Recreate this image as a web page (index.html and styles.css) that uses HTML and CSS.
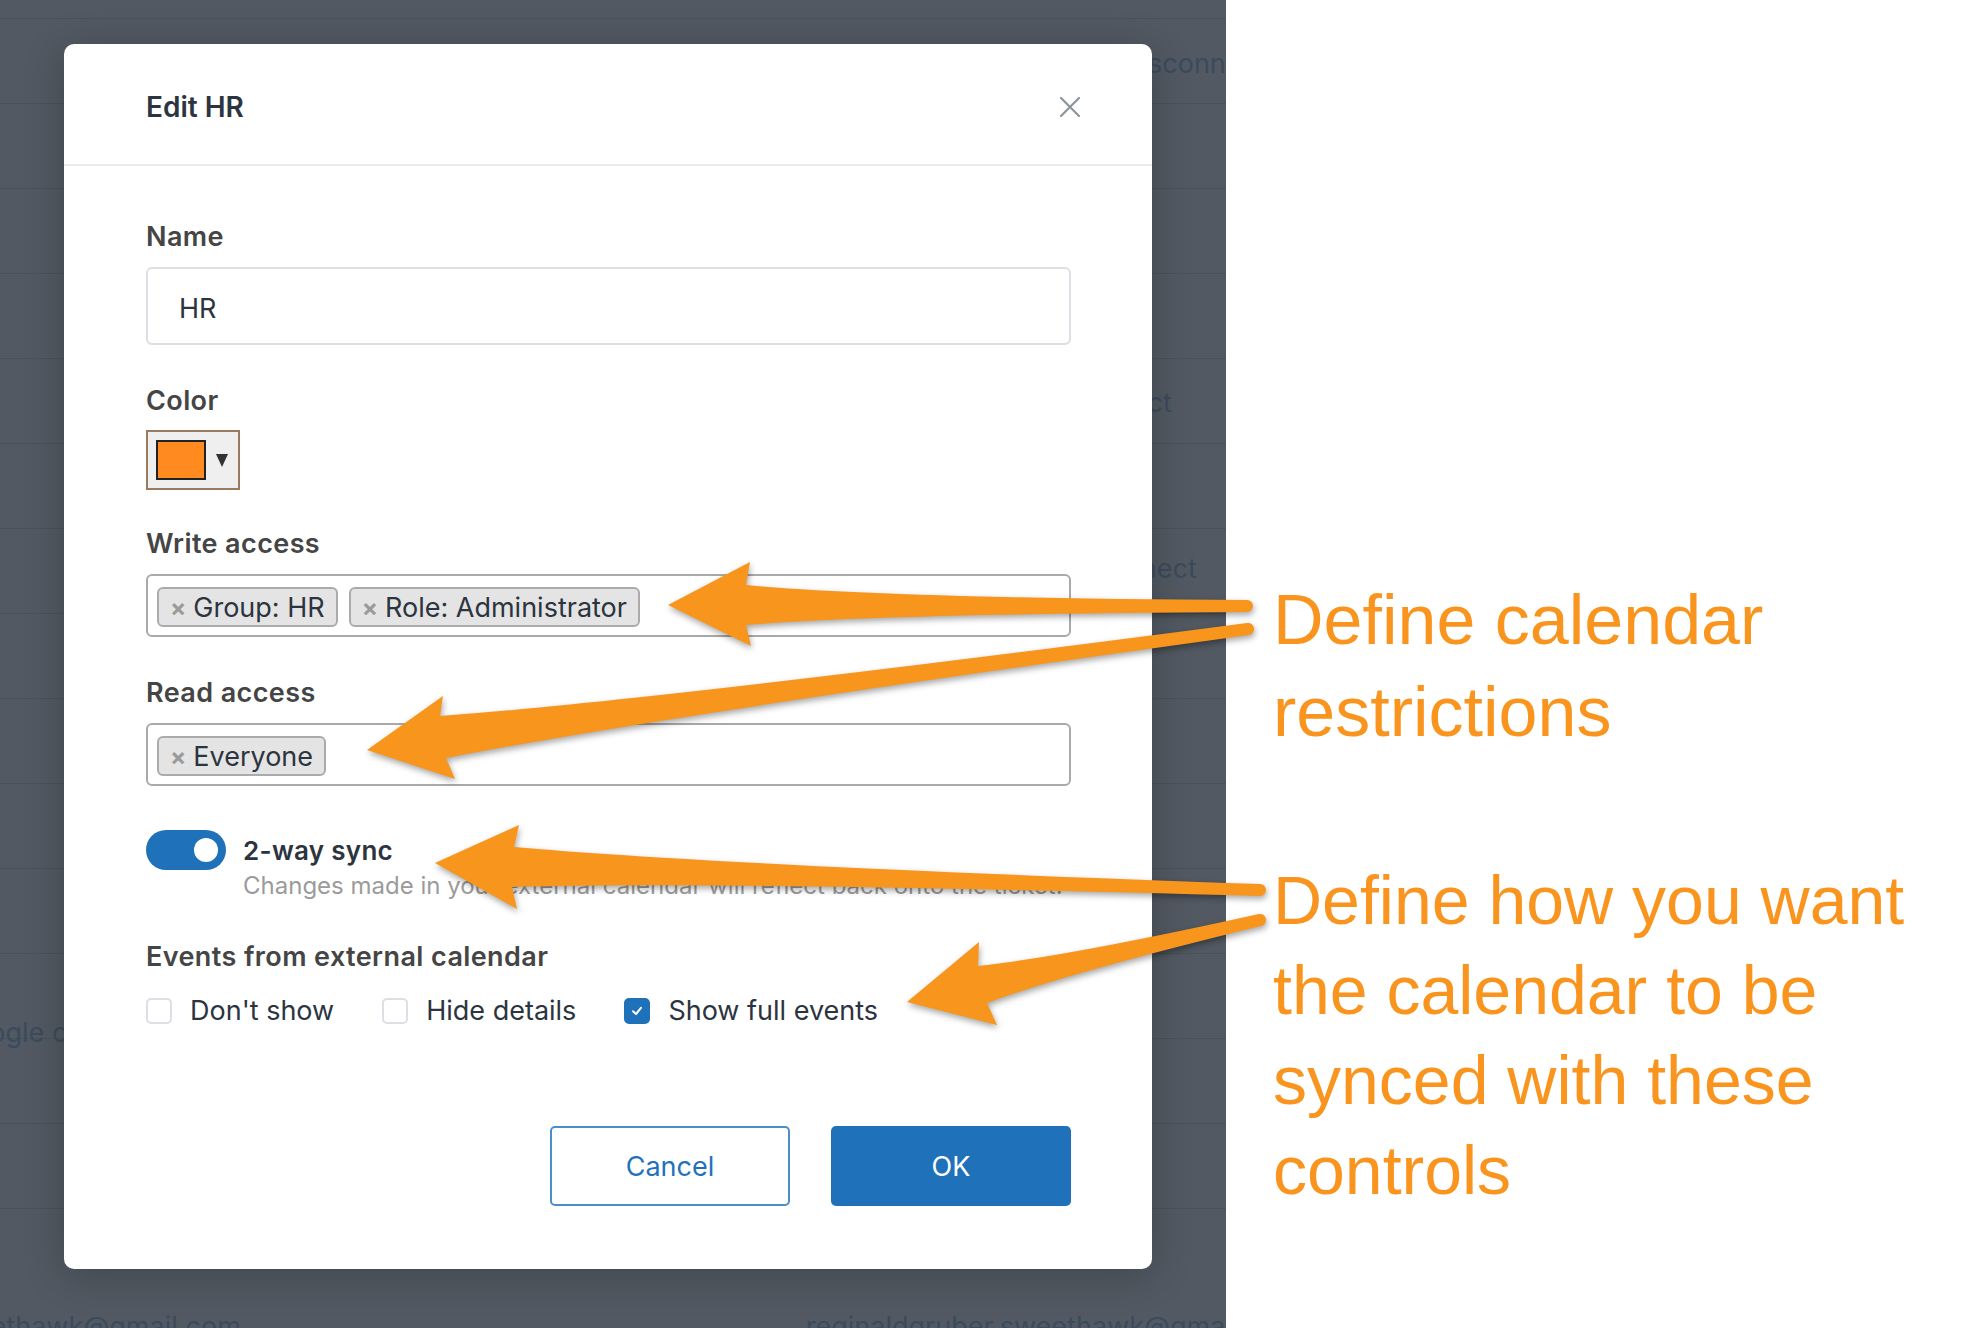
FILE: index.html
```html
<!DOCTYPE html>
<html lang="en">
<head>
    <meta charset="UTF-8">
    <meta name="viewport" content="width=device-width, initial-scale=1.0">
    <title>Edit HR calendar</title>
    <link rel="stylesheet" href="styles.css">
</head>
<body>
    <div class="screen">
        <main class="app">
            <!-- page behind the dialog, dimmed -->
            <div class="bg-rows">
                <div class="bg-row bg-row-top"></div>
                <div class="bg-row"><span class="bg-text at-disconnect">Disconnect</span></div>
                <div class="bg-row"></div>
                <div class="bg-row"></div>
                <div class="bg-row"></div>
                <div class="bg-row"><span class="bg-text at-connect-a">Connect</span></div>
                <div class="bg-row"></div>
                <div class="bg-row"><span class="bg-text at-connect-b">Connect</span></div>
                <div class="bg-row"></div>
                <div class="bg-row"></div>
                <div class="bg-row"></div>
                <div class="bg-row"></div>
                <div class="bg-row"><span class="bg-text at-google">Google calendar</span></div>
                <div class="bg-row"></div>
                <div class="bg-row"></div>
                <div class="bg-row bg-row-bottom">
                    <span class="bg-text at-mail-a">sweethawk@gmail.com</span>
                    <span class="bg-text at-mail-b">reginaldgruber.sweethawk@gmail.com</span>
                </div>
            </div>

            <div class="backdrop">
                <section class="modal">
                    <header class="modal-head">
                        <h2 class="modal-title">Edit HR</h2>
                        <button class="close" aria-label="Close">
                            <svg width="20" height="20" viewBox="0 0 20 20">
                                <path d="M1 1 L19 19 M19 1 L1 19" stroke="#8b949d" stroke-width="2.2" stroke-linecap="round"/>
                            </svg>
                        </button>
                    </header>

                    <div class="modal-body">
                        <div class="field">
                            <label class="field-label">Name</label>
                            <div class="text-input">HR</div>
                        </div>

                        <div class="field field-color">
                            <label class="field-label label-color">Color</label>
                            <div class="color-btn">
                                <span class="swatch"></span>
                                <span class="caret"></span>
                            </div>
                        </div>

                        <div class="field">
                            <label class="field-label">Write access</label>
                            <div class="tags">
                                <span class="tag"><span class="tag-x">×</span>Group: HR</span>
                                <span class="tag"><span class="tag-x">×</span>Role: Administrator</span>
                            </div>
                        </div>

                        <div class="field field-read">
                            <label class="field-label">Read access</label>
                            <div class="tags">
                                <span class="tag"><span class="tag-x">×</span>Everyone</span>
                            </div>
                        </div>

                        <div class="sync">
                            <span class="toggle"><span class="knob"></span></span>
                            <div class="sync-text">
                                <div class="sync-title">2-way sync</div>
                                <div class="sync-help">Changes made in your external calendar will reflect back onto the ticket.</div>
                            </div>
                        </div>

                        <label class="field-label label-events">Events from external calendar</label>
                        <div class="checks">
                            <span class="check"><span class="box"></span>Don't show</span>
                            <span class="check"><span class="box"></span>Hide details</span>
                            <span class="check"><span class="box on">
                                <svg width="14" height="14" viewBox="0 0 14 14"><path d="M3 7.2 L6 10 L11 3.8" fill="none" stroke="#fff" stroke-width="2" stroke-linecap="round" stroke-linejoin="round"/></svg>
                            </span>Show full events</span>
                        </div>

                        <div class="actions">
                            <button class="btn btn-cancel">Cancel</button>
                            <button class="btn btn-ok">OK</button>
                        </div>
                    </div>
                </section>
            </div>
        </main>

        <aside class="notes">
            <p class="note note-restrict">Define calendar<br>restrictions</p>
            <p class="note note-sync">Define how you want<br>the calendar to be<br>synced with these<br>controls</p>
        </aside>
    </div>

    <!-- annotation arrows drawn over everything -->
    <svg class="arrows" width="1974" height="1328" viewBox="0 0 1974 1328">
        <g fill="#f8951d">
            <path d="M668 605 L750 562 L746 585 Q880 598 1247 600 A6 6 0 0 1 1247 612 Q880 614 746 625 L751 646 Z"/>
            <path d="M367 750 L443 696 L440 716 Q659 700 1247 623 A6 6 0 0 1 1249 635 Q661 716 446 758 L455 779 Z"/>
            <path d="M435 863 L519 825 L514 847 Q715 865 1260 884 A6 6 0 0 1 1260 896 Q715 881 512 887 L517 909 Z"/>
            <path d="M907 1002 L979 942 L978 966 Q1064 957 1259 914 A6 6 0 0 1 1261 926 Q1068 973 987 1003 L997 1025 Z"/>
        </g>
    </svg>
</body>
</html>
```

FILE: styles.css
```css
body {
    margin: 0;
    position: relative;
    font-family: Inter, "Noto Sans", sans-serif;
}
.screen {
    display: flex;
    width: 1974px;
    height: 1328px;
    overflow: hidden;
    background: #fff;
}

/* dimmed page behind the dialog */
.app {
    flex: none;
    width: 1226px;
    position: relative;
    overflow: hidden;
    background: #525962;
}
.bg-row {
    height: 84px;
    border-bottom: 1px solid #4a5159;
    display: flex;
    align-items: center;
    white-space: nowrap;
}
.bg-row-top {
    height: 18px;
}
.bg-row-bottom {
    height: auto;
    border: 0;
    padding-top: 102px;
    align-items: flex-start;
}
.bg-text {
    font-size: 27px;
    line-height: 32px;
    color: #3a4b5d;
}
.at-disconnect { margin-left: 1122px; margin-top: 5px; }
.at-connect-a { margin-left: 1064px; margin-top: 4px; }
.at-connect-b { margin-left: 1089px; margin-top: -4px; }
.at-google { margin-left: -47px; margin-top: 74px; }
.at-mail-a { margin-left: -61px; }
.at-mail-b { margin-left: 565px; }

.backdrop {
    position: absolute;
    inset: 0;
    padding: 44px 0 0 64px;
}

/* dialog */
.modal {
    box-sizing: border-box;
    width: 1088px;
    height: 1225px;
    background: #fff;
    border-radius: 10px;
    box-shadow: 0 6px 40px rgba(0, 0, 0, 0.22);
    display: flex;
    flex-direction: column;
}
.modal-head {
    display: flex;
    align-items: center;
    justify-content: space-between;
    padding: 46px 72px 40px 82px;
    border-bottom: 2px solid #ececec;
}
.modal-title {
    margin: 0;
    font-size: 28px;
    line-height: 34px;
    font-weight: 600;
    color: #2c3440;
}
.close {
    width: 20px;
    height: 20px;
    padding: 0;
    border: 0;
    background: none;
    display: block;
}
.close svg {
    display: block;
}
.modal-body {
    flex: 1;
    display: flex;
    flex-direction: column;
    padding: 55px 81px 63px 82px;
}

.field {
    margin-bottom: 40px;
}
.field-color {
    margin-bottom: 38px;
}
.field-read {
    margin-bottom: 44px;
}
.field-label {
    display: block;
    font-size: 27px;
    letter-spacing: 0.4px;
    line-height: 32px;
    font-weight: 600;
    color: #454545;
    margin-bottom: 14px;
}
.label-color {
    margin-bottom: 13px;
}
.label-events {
    margin-bottom: 22px;
}

.text-input {
    box-sizing: border-box;
    height: 78px;
    border: 2px solid #dcdfe3;
    border-radius: 6px;
    padding: 4px 31px 0;
    display: flex;
    align-items: center;
    font-size: 27px;
    color: #2c3440;
}

.color-btn {
    box-sizing: border-box;
    width: 94px;
    height: 60px;
    border: 2px solid #9a7b5f;
    background: #efefef;
    display: flex;
    align-items: center;
    padding-left: 8px;
}
.swatch {
    box-sizing: border-box;
    width: 50px;
    height: 40px;
    border: 2px solid #222;
    background: #ff8a1f;
}
.caret {
    margin-left: 10px;
    border-left: 6px solid transparent;
    border-right: 6px solid transparent;
    border-top: 13px solid #333;
}

.tags {
    box-sizing: border-box;
    height: 63px;
    border: 2px solid #a9a9a9;
    border-radius: 6px;
    padding: 2px 9px 0;
    display: flex;
    align-items: center;
    gap: 11px;
}
.tag {
    box-sizing: border-box;
    height: 40px;
    border: 2px solid #ababab;
    border-radius: 6px;
    background: #e4e4e4;
    padding: 2px 11px 0;
    display: flex;
    align-items: center;
    gap: 7px;
    font-size: 27px;
    color: #2c3440;
}
.tag-x {
    font-size: 24px;
    font-weight: 700;
    color: #9a9a9a;
}

.sync {
    display: flex;
    gap: 17px;
    margin-bottom: 40px;
}
.toggle {
    flex: none;
    box-sizing: border-box;
    width: 80px;
    height: 40px;
    border-radius: 20px;
    background: #1f72ba;
    display: flex;
    align-items: center;
    justify-content: flex-end;
    padding-right: 8px;
}
.knob {
    width: 24px;
    height: 24px;
    border-radius: 50%;
    background: #fff;
}
.sync-text {
    margin-top: 5px;
}
.sync-title {
    font-size: 26px;
    letter-spacing: 0.3px;
    line-height: 32px;
    font-weight: 600;
    color: #2c3440;
}
.sync-help {
    margin-top: 4px;
    font-size: 24px;
    line-height: 30px;
    color: #9b9b9b;
}

.checks {
    display: flex;
    align-items: center;
}
.check {
    display: flex;
    align-items: center;
    gap: 18px;
    margin-right: 48px;
    font-size: 27px;
    line-height: 32px;
    color: #2c3440;
}
.box {
    box-sizing: border-box;
    width: 26px;
    height: 26px;
    border: 2px solid #dcdfe3;
    border-radius: 5px;
    display: flex;
    align-items: center;
    justify-content: center;
}
.box.on {
    background: #1f72ba;
    border-color: #1f72ba;
}

.actions {
    margin-top: auto;
    display: flex;
    justify-content: flex-end;
    gap: 41px;
}
.btn {
    box-sizing: border-box;
    width: 240px;
    height: 80px;
    border-radius: 5px;
    font-family: inherit;
    font-size: 27px;
}
.btn-cancel {
    background: #fff;
    border: 2px solid #4a8fc9;
    color: #1f72ba;
}
.btn-ok {
    background: #1f72ba;
    border: 0;
    color: #fff;
}

/* annotation text on the right */
.notes {
    flex: 1;
    padding: 574px 0 0 47px;
    font-family: "Liberation Sans", Arial, sans-serif;
    color: #f9951f;
}
.note {
    margin: 0;
    white-space: nowrap;
}
.note-restrict {
    font-size: 70px;
    line-height: 92px;
}
.note-sync {
    margin-top: 97px;
    font-size: 68px;
    line-height: 90px;
}

.arrows {
    position: absolute;
    top: 0;
    left: 0;
    pointer-events: none;
    filter: drop-shadow(1px 3px 3px rgba(0, 0, 0, 0.35));
}
```
